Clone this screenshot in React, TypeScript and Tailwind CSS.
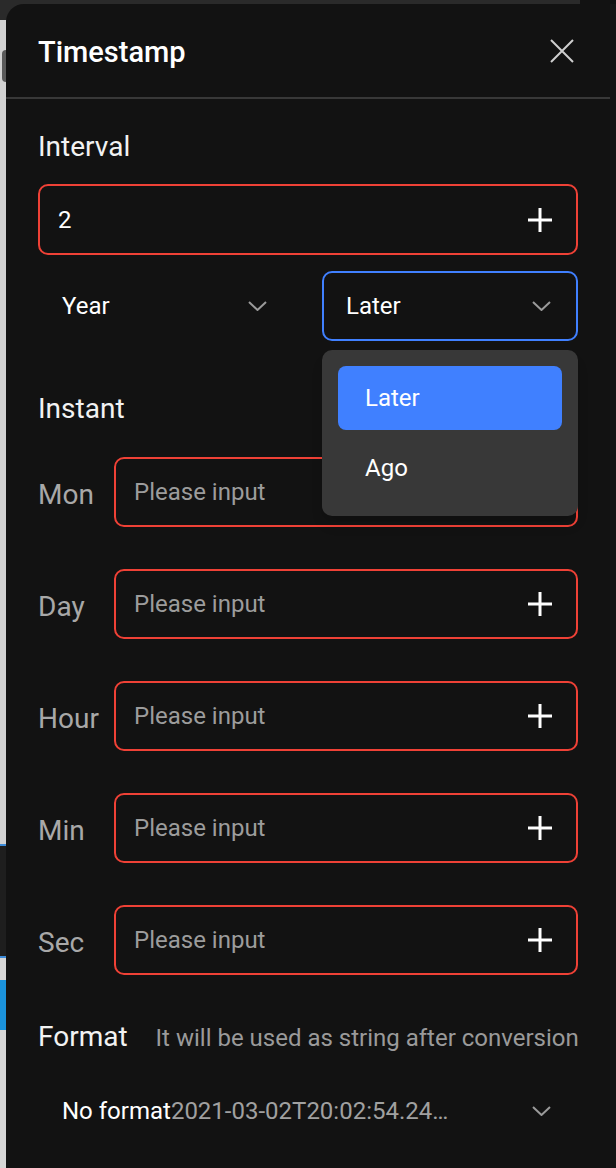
import React from 'react';

const font = { fontFamily: 'Roboto, "Noto Sans", Arial, sans-serif' };

const Plus = () => (
  <svg width="24" height="24" viewBox="0 0 24 24" fill="none" stroke="#ffffff" strokeWidth="3" strokeLinecap="butt">
    <path d="M12 0v24M0 12h24" />
  </svg>
);

const Chevron = () => (
  <svg width="19" height="10" viewBox="0 0 19 10" fill="none" stroke="#9a9a9a" strokeWidth="2">
    <path d="M1 1l8.5 8 8.5-8" />
  </svg>
);

const Close = () => (
  <svg width="24" height="24" viewBox="0 0 24 24" fill="none" stroke="#cfcfcf" strokeWidth="2">
    <path d="M1 1l22 22M23 1L1 23" />
  </svg>
);

const rows = ['Mon', 'Day', 'Hour', 'Min', 'Sec'];

const App: React.FC = () => {
  return (
    <div className="w-[616px] h-[1168px] bg-[#2a2a2a] flex overflow-hidden" style={font}>
      {/* left background strip */}
      <div className="w-[6px] flex flex-col shrink-0">
        <div className="h-[20px] bg-[#2a2a2a]" />
        <div className="h-[30px] bg-[#d2d2d2]" />
        <div className="h-[32px] bg-[#d2d2d2] flex justify-end">
          <div className="w-[4px] h-full bg-[#5a5a5a] rounded-l-sm" />
        </div>
        <div className="h-[762px] bg-[#d2d2d2]" />
        <div className="h-[2px] bg-[#3d8bd8]" />
        <div className="h-[110px] bg-[#1e1e1e]" />
        <div className="h-[2px] bg-[#3d8bd8]" />
        <div className="h-[22px] bg-[#d6d6d6]" />
        <div className="h-[50px] bg-[#1b93dc]" />
        <div className="flex-1 bg-[#d6d6d6]" />
      </div>

      <div className="flex-1 flex flex-col">
        <div className="h-[4px] flex shrink-0">
          <div className="w-[574px] bg-[#2a2a2a]" />
          <div className="flex-1 bg-[#121212]" />
        </div>
        <div className="flex flex-1">
          {/* panel */}
          <div className="w-[604px] bg-[#121212] rounded-tl-[18px] flex flex-col">
            <div className="h-[95px] pl-8 pr-9 flex items-center justify-between border-b-2 border-[#383838]">
              <span className="text-[29px] font-medium text-white leading-none pt-[4px]">Timestamp</span>
              <Close />
            </div>

            <div className="px-8 pt-[30px]">
              <div className="text-[28px] leading-[36px] text-[#f2f2f2]">Interval</div>
              <div className="mt-[19px] h-[71px] border-2 border-[#ef4136] rounded-[10px] flex items-center justify-between pl-[18px] pr-[24px]">
                <span className="text-[24px] text-white">2</span>
                <Plus />
              </div>

              <div className="mt-[16px] grid grid-cols-2 gap-[28px]">
                <div className="h-[70px] border-2 border-transparent rounded-[10px] flex items-center justify-between pl-[22px] pr-[25px]">
                  <span className="text-[24px] text-white">Year</span>
                  <Chevron />
                </div>
                <div className="relative">
                  <div className="h-[70px] border-2 border-[#4080ff] rounded-[10px] flex items-center justify-between pl-[22px] pr-[25px]">
                    <span className="text-[24px] text-white">Later</span>
                    <Chevron />
                  </div>
                  <div className="absolute left-0 right-0 top-[79px] z-10 bg-[#383838] rounded-[10px] p-4 flex flex-col gap-[6px] shadow-lg">
                    <div className="h-16 rounded-[8px] bg-[#4080ff] flex items-center pl-[27px] text-[24px] text-white">Later</div>
                    <div className="h-16 rounded-[8px] flex items-center pl-[27px] text-[24px] text-white">Ago</div>
                  </div>
                </div>
              </div>

              <div className="mt-[50px] text-[28px] leading-[36px] text-[#f2f2f2]">Instant</div>

              <div className="mt-[30px] flex flex-col gap-[42px]">
                {rows.map((r) => (
                  <div key={r} className="flex items-center">
                    <span className="w-[76px] text-[28px] text-[#a8a8a8] pt-[6px]">{r}</span>
                    <div className="flex-1 h-[70px] border-2 border-[#ef4136] rounded-[10px] flex items-center justify-between pl-[18px] pr-[24px]">
                      <span className="text-[24px] text-[#9c9c9c]">Please input</span>
                      <Plus />
                    </div>
                  </div>
                ))}
              </div>

              <div className="mt-[44px] flex items-baseline gap-[28px]">
                <span className="text-[28px] leading-[36px] text-[#f2f2f2]">Format</span>
                <span className="text-[24px] text-[#9a9a9a] whitespace-nowrap">It will be used as string after conversion</span>
              </div>

              <div className="mt-[20px] h-[70px] border-2 border-transparent flex items-center justify-between pl-[22px] pr-[25px]">
                <span className="text-[24px] text-white whitespace-nowrap">
                  No format<span className="text-[#a0a0a0]">2021-03-02T20:02:54.24…</span>
                </span>
                <Chevron />
              </div>
            </div>
          </div>
          <div className="flex-1 bg-[#161616]" />
        </div>
      </div>
    </div>
  );
};

export default App;
